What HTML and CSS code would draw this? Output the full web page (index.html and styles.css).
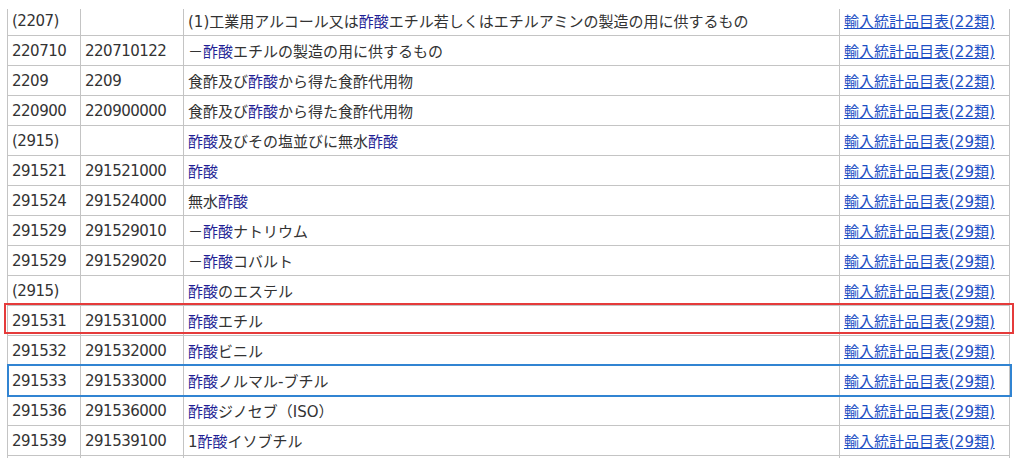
FILE: index.html
```html
<!DOCTYPE html>
<html lang="ja">
<head>
<meta charset="utf-8">
<title>酢酸 検索結果</title>
<link rel="stylesheet" href="styles.css">
</head>
<body>
<div class="frame">
  <table class="codes">
    <colgroup>
      <col class="c1"><col class="c2"><col class="c3"><col class="c4">
    </colgroup>
    <tbody>
      <tr><td class="num">(2207)</td><td class="num"></td><td class="desc">(1)工業用アルコール又は<span class="hl">酢酸</span>エチル若しくはエチルアミンの製造の用に供するもの</td><td class="ref"><a href="#">輸入統計品目表(22類)</a></td></tr>
      <tr><td class="num">220710</td><td class="num">220710122</td><td class="desc">－<span class="hl">酢酸</span>エチルの製造の用に供するもの</td><td class="ref"><a href="#">輸入統計品目表(22類)</a></td></tr>
      <tr><td class="num">2209</td><td class="num">2209</td><td class="desc">食酢及び<span class="hl">酢酸</span>から得た食酢代用物</td><td class="ref"><a href="#">輸入統計品目表(22類)</a></td></tr>
      <tr><td class="num">220900</td><td class="num">220900000</td><td class="desc">食酢及び<span class="hl">酢酸</span>から得た食酢代用物</td><td class="ref"><a href="#">輸入統計品目表(22類)</a></td></tr>
      <tr><td class="num">(2915)</td><td class="num"></td><td class="desc"><span class="hl">酢酸</span>及びその塩並びに無水<span class="hl">酢酸</span></td><td class="ref"><a href="#">輸入統計品目表(29類)</a></td></tr>
      <tr><td class="num">291521</td><td class="num">291521000</td><td class="desc"><span class="hl">酢酸</span></td><td class="ref"><a href="#">輸入統計品目表(29類)</a></td></tr>
      <tr><td class="num">291524</td><td class="num">291524000</td><td class="desc">無水<span class="hl">酢酸</span></td><td class="ref"><a href="#">輸入統計品目表(29類)</a></td></tr>
      <tr><td class="num">291529</td><td class="num">291529010</td><td class="desc">－<span class="hl">酢酸</span>ナトリウム</td><td class="ref"><a href="#">輸入統計品目表(29類)</a></td></tr>
      <tr><td class="num">291529</td><td class="num">291529020</td><td class="desc">－<span class="hl">酢酸</span>コバルト</td><td class="ref"><a href="#">輸入統計品目表(29類)</a></td></tr>
      <tr><td class="num">(2915)</td><td class="num"></td><td class="desc"><span class="hl">酢酸</span>のエステル</td><td class="ref"><a href="#">輸入統計品目表(29類)</a></td></tr>
      <tr><td class="num">291531</td><td class="num">291531000</td><td class="desc"><span class="hl">酢酸</span>エチル</td><td class="ref"><a href="#">輸入統計品目表(29類)</a></td></tr>
      <tr><td class="num">291532</td><td class="num">291532000</td><td class="desc"><span class="hl">酢酸</span>ビニル</td><td class="ref"><a href="#">輸入統計品目表(29類)</a></td></tr>
      <tr><td class="num">291533</td><td class="num">291533000</td><td class="desc"><span class="hl">酢酸</span>ノルマル-ブチル</td><td class="ref"><a href="#">輸入統計品目表(29類)</a></td></tr>
      <tr><td class="num">291536</td><td class="num">291536000</td><td class="desc"><span class="hl">酢酸</span>ジノセブ（ISO）</td><td class="ref"><a href="#">輸入統計品目表(29類)</a></td></tr>
      <tr><td class="num">291539</td><td class="num">291539100</td><td class="desc">1<span class="hl">酢酸</span>イソブチル</td><td class="ref"><a href="#">輸入統計品目表(29類)</a></td></tr>
      <tr class="tail"><td></td><td></td><td></td><td></td></tr>
    </tbody>
  </table>
  <div class="mark mark-red"></div>
  <div class="mark mark-blue"></div>
</div>
</body>
</html>
```

FILE: styles.css
```css
html, body {
  margin: 0;
  padding: 0;
  background: #ffffff;
}

body {
  font-family: "DejaVu Sans", "Noto Sans CJK JP", sans-serif;
  color: #333333;
}

.frame {
  position: relative;
  margin-top: 9px;
  height: 449px;
  overflow: hidden;
}

.codes {
  margin: -4px 0 0 7px;
  width: 1002px;
  border-collapse: collapse;
  table-layout: fixed;
}

.c1 { width: 73px; }
.c2 { width: 103px; }
.c3 { width: 656px; }
.c4 { width: 170px; }

.codes td {
  border: 1px solid #c4c4c4;
  height: 29px;
  padding: 0 4px;
  vertical-align: middle;
  white-space: nowrap;
  overflow: hidden;
}

.codes td.num {
  font-size: 15px;
  letter-spacing: -0.5px;
}

.codes td.desc,
.codes td.ref {
  font-size: 15px;
}

.hl {
  color: #1f1f96;
}

.ref a {
  color: #1d4fc4;
  text-decoration: underline;
}

.mark {
  position: absolute;
  box-sizing: border-box;
  pointer-events: none;
}

.mark-red {
  left: 4px;
  top: 294px;
  width: 1010px;
  height: 31px;
  border: 2px solid #e53b3b;
}

.mark-blue {
  left: 7px;
  top: 355px;
  width: 1005px;
  height: 33px;
  border: 2px solid #3184d2;
}
```
